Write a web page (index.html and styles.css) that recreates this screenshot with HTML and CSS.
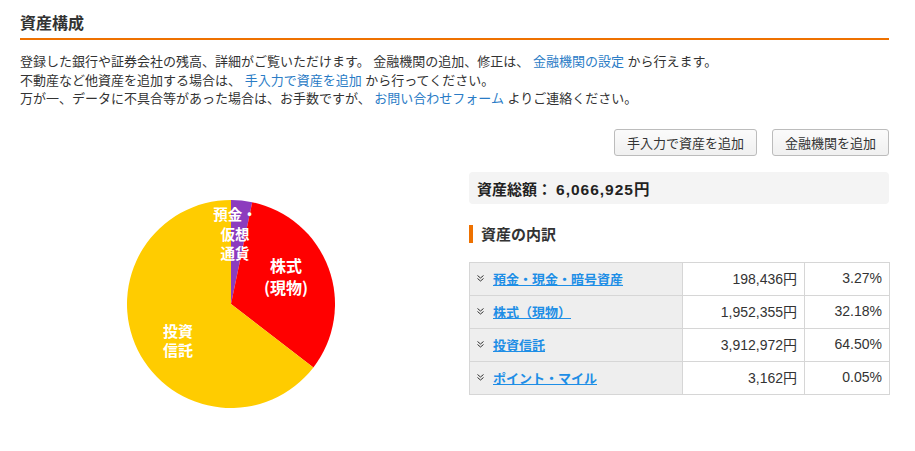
FILE: index.html
```html
<!DOCTYPE html>
<html lang="ja">
<head>
<meta charset="utf-8">
<title>資産構成</title>
<link rel="stylesheet" href="styles.css">
</head>
<body>
<div class="page">
  <h2 class="title">資産構成</h2>
  <p class="intro">
    登録した銀行や証券会社の残高、詳細がご覧いただけます。 金融機関の追加、修正は、 <a href="#">金融機関の設定</a> から行えます。<br>
    不動産など他資産を追加する場合は、 <a href="#">手入力で資産を追加</a> から行ってください。<br>
    万が一、データに不具合等があった場合は、お手数ですが、 <a href="#">お問い合わせフォーム</a> よりご連絡ください。
  </p>
  <div class="actions">
    <button class="btn" type="button">手入力で資産を追加</button>
    <button class="btn" type="button">金融機関を追加</button>
  </div>
  <div class="content">
    <div class="chart">
      <svg class="pie" width="422" height="270" viewBox="0 0 422 270">
        <path d="M211 132 L211 28 A104 104 0 0 1 232.22 30.18 Z" fill="#8c3cbe"/>
        <path d="M211 132 L232.22 30.18 A104 104 0 0 1 293.40 195.45 Z" fill="#ff0000"/>
        <path d="M211 132 L293.40 195.45 A104 104 0 1 1 211 28 Z" fill="#ffcc00"/>
        <g class="lbl">
          <text x="215" y="41" class="small">預金・</text>
          <text x="215" y="61" class="small">仮想</text>
          <text x="215" y="80" class="small">通貨</text>
          <text x="266" y="93">株式</text>
          <text x="266" y="115">(現物)</text>
          <text x="158" y="158" class="mid">投資</text>
          <text x="158" y="177.5" class="mid">信託</text>
        </g>
      </svg>
    </div>
    <div class="summary">
      <div class="total"><span class="total-label">資産総額：</span><span class="total-num">6,066,925円</span></div>
      <h3 class="sub">資産の内訳</h3>
      <table class="breakdown">
        <colgroup><col class="c1"><col class="c2"><col class="c3"></colgroup>
        <tbody>
          <tr>
            <td class="name"><svg class="chev" width="7" height="7" viewBox="0 0 7 7"><path d="M0.5 0.5 L3.5 3 L6.5 0.5 M0.5 3.5 L3.5 6 L6.5 3.5"/></svg><a href="#">預金・現金・暗号資産</a></td>
            <td class="num">198,436円</td>
            <td class="num">3.27%</td>
          </tr>
          <tr>
            <td class="name"><svg class="chev" width="7" height="7" viewBox="0 0 7 7"><path d="M0.5 0.5 L3.5 3 L6.5 0.5 M0.5 3.5 L3.5 6 L6.5 3.5"/></svg><a href="#">株式（現物）</a></td>
            <td class="num">1,952,355円</td>
            <td class="num">32.18%</td>
          </tr>
          <tr>
            <td class="name"><svg class="chev" width="7" height="7" viewBox="0 0 7 7"><path d="M0.5 0.5 L3.5 3 L6.5 0.5 M0.5 3.5 L3.5 6 L6.5 3.5"/></svg><a href="#">投資信託</a></td>
            <td class="num">3,912,972円</td>
            <td class="num">64.50%</td>
          </tr>
          <tr>
            <td class="name"><svg class="chev" width="7" height="7" viewBox="0 0 7 7"><path d="M0.5 0.5 L3.5 3 L6.5 0.5 M0.5 3.5 L3.5 6 L6.5 3.5"/></svg><a href="#">ポイント・マイル</a></td>
            <td class="num">3,162円</td>
            <td class="num">0.05%</td>
          </tr>
        </tbody>
      </table>
    </div>
  </div>
</div>
</body>
</html>
```
FILE: styles.css
```css
* { box-sizing: border-box; }
html, body { margin: 0; padding: 0; background: #fff; }
body {
  font-family: "Liberation Sans", "Noto Sans CJK JP", sans-serif;
  color: #333;
  font-size: 13px;
}
.page { padding: 12px 26px 0 20px; }
.title {
  margin: 0;
  font-size: 16px;
  line-height: 20px;
  font-weight: bold;
  font-family: "Noto Sans CJK JP", sans-serif;
  padding-bottom: 6px;
  border-bottom: 2px solid #ee7100;
}
.intro {
  margin: 13px 0 0;
  font-size: 13px;
  line-height: 18.5px;
}
.intro a { color: #2a7cc6; text-decoration: none; }
.actions {
  margin-top: 20.5px;
  display: flex;
  justify-content: flex-end;
  gap: 15px;
}
.btn {
  height: 27px;
  padding: 0 12px;
  font-family: "Noto Sans CJK JP", sans-serif;
  font-size: 13px;
  color: #333;
  background: linear-gradient(#fbfbfb, #f0f0f0);
  border: 1px solid #bcbcbc;
  border-radius: 3px;
  line-height: 25px;
}
.content {
  margin-top: 16px;
  display: grid;
  grid-template-columns: 422px 420px;
  gap: 27px;
}
.pie { display: block; }
.lbl text {
  fill: #fff;
  font-family: "Noto Sans CJK JP", sans-serif;
  font-weight: bold;
  font-size: 16px;
  text-anchor: middle;
  dominant-baseline: central;
}
.lbl text.small { font-size: 14.5px; }
.lbl text.mid { font-size: 15px; }
.total {
  height: 32px;
  background: #f4f4f4;
  border-radius: 4px;
  padding-left: 8px;
  display: flex;
  align-items: center;
  font-weight: bold;
  color: #222;
}
.total-label { font-family: "Noto Sans CJK JP", sans-serif; font-size: 15px; }
.total-num {
  margin-left: 4px;
  font-family: "Liberation Sans", "Noto Sans CJK JP", sans-serif;
  font-size: 15.5px;
  letter-spacing: 1px;
}
.sub {
  margin: 21px 0 0;
  height: 18px;
  line-height: 18px;
  border-left: 4px solid #ee7100;
  padding-left: 8px;
  font-size: 15px;
  font-weight: bold;
  font-family: "Noto Sans CJK JP", sans-serif;
}
.breakdown {
  margin-top: 19px;
  width: 420px;
  border-collapse: collapse;
  table-layout: fixed;
}
.c1 { width: 213px; }
.c2 { width: 122px; }
.c3 { width: 85px; }
.breakdown td {
  border: 1px solid #d6d6d6;
  height: 33px;
  padding: 0 7px 2px;
  vertical-align: middle;
}
.breakdown td.name {
  background: #eeeeee;
  font-family: "Noto Sans CJK JP", sans-serif;
  font-size: 13px;
  font-weight: bold;
  white-space: nowrap;
}
.chev {
  display: inline-block;
  vertical-align: middle;
  margin-right: 9px;
  position: relative;
  top: -1px;
}
.chev path { fill: none; stroke: #333; stroke-width: 1; }
.breakdown td.name a { color: #1e8ee6; text-decoration: underline; }
.breakdown td.num {
  text-align: right;
  font-size: 14px;
  color: #333;
}
```
